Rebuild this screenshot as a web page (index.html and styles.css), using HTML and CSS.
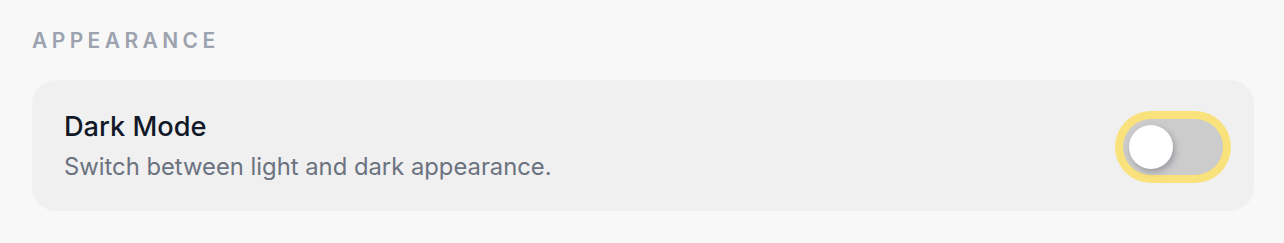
FILE: index.html
```html
<html>
<head>
  <meta charset="utf-8">
  <title>Settings</title>
  <link rel="stylesheet" href="styles.css">
</head>
<body>
  <section class="settings">
    <h2 class="section-title">Appearance</h2>
    <div class="card">
      <div class="card-text">
        <div class="card-label">Dark Mode</div>
        <div class="card-desc">Switch between light and dark appearance.</div>
      </div>
      <button class="toggle" aria-label="Dark Mode"><span class="knob"></span></button>
    </div>
  </section>
</body>
</html>
```

FILE: styles.css
```css
body {
  margin: 0;
  padding: 29px 30px 0 32px;
  background: #f8f8f8;
  font-family: Inter, "Noto Sans", sans-serif;
}
.section-title {
  margin: 0 0 27px 0;
  font-size: 21px;
  line-height: 24px;
  font-weight: 600;
  letter-spacing: 0.21em;
  text-transform: uppercase;
  color: #9ca3af;
}
.card {
  display: flex;
  align-items: center;
  justify-content: space-between;
  padding: 29px 31px 27px 32px;
  background: #f0f0f0;
  border-radius: 24px;
}
.card-label {
  font-size: 27.2px;
  line-height: 36px;
  font-weight: 500;
  color: #111827;
}
.card-desc {
  margin-top: 5px;
  font-size: 23.8px;
  line-height: 34px;
  color: #6b7280;
}
.toggle {
  width: 100px;
  height: 56px;
  padding: 6px;
  border: none;
  border-radius: 28px;
  background: #cccccc;
  box-shadow: 0 0 0 8px #f9e17b;
  display: flex;
  align-items: center;
}
.knob {
  width: 44px;
  height: 44px;
  border-radius: 50%;
  background: #fff;
  box-shadow: 2px 3px 6px rgba(60, 60, 80, 0.35);
}
```
